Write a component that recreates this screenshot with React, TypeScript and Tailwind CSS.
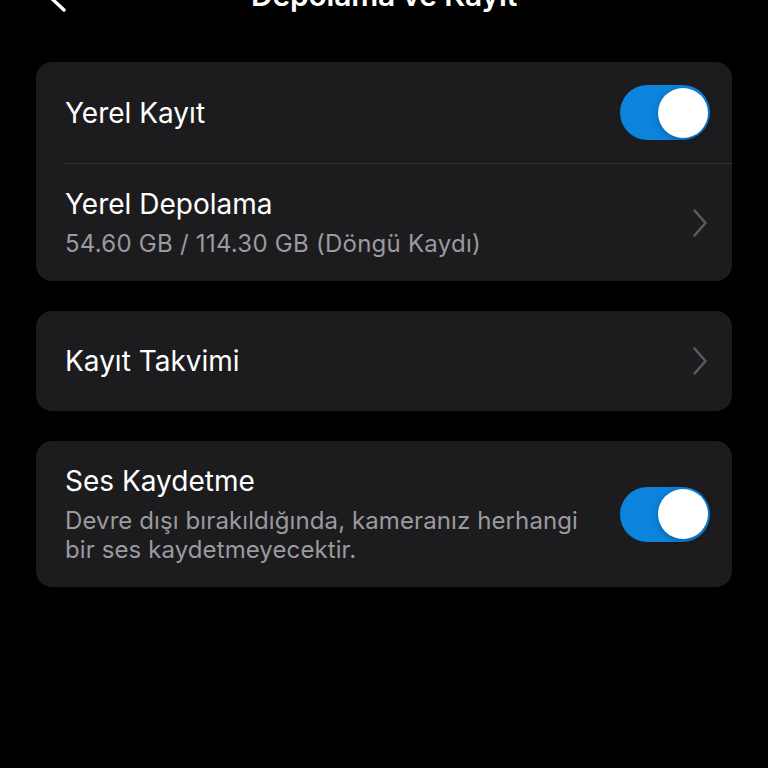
import { useState } from 'react';

function Toggle({ on, onChange }: { on: boolean; onChange: () => void }) {
  return (
    <button
      onClick={onChange}
      className={`relative flex h-[55px] w-[90px] shrink-0 items-center rounded-full px-[2px] ${
        on ? 'justify-end bg-[#0c83dc]' : 'justify-start bg-[#39393d]'
      }`}
    >
      <span className="h-[50px] w-[50px] rounded-full bg-white shadow-[0_2px_6px_rgba(0,0,0,0.25)]" />
    </button>
  );
}

function Chevron() {
  return (
    <svg width="16" height="30" viewBox="0 0 16 30" fill="none" className="shrink-0">
      <path d="M2.5 2.5 L13.5 15 L2.5 27.5" stroke="#5b5b5f" strokeWidth="2.6" strokeLinecap="round" strokeLinejoin="round" />
    </svg>
  );
}

export default function App() {
  const [localRec, setLocalRec] = useState(true);
  const [audio, setAudio] = useState(true);

  return (
    <div
      className="h-[768px] w-[768px] overflow-hidden bg-black text-white"
      style={{ fontFamily: 'Inter, "Noto Sans", sans-serif' }}
    >
      {/* header, scrolled mostly off the top */}
      <div className="relative h-[62px]">
        <svg width="24" height="36" viewBox="0 0 24 36" fill="none" className="absolute left-[44px] top-[-22px]">
          <path d="M20 2 L4 17 L20 32" stroke="white" strokeWidth="3.4" strokeLinecap="round" strokeLinejoin="round" />
        </svg>
        <div className="absolute left-0 right-0 top-[-23px] text-center text-[30px] font-semibold leading-[36px] tracking-[-0.2px]">
          Depolama ve Kayıt
        </div>
      </div>

      <div className="flex flex-col gap-[30px] px-[36px]">
        <div className="overflow-hidden rounded-[16px] bg-[#1c1c1e]">
          <div className="flex h-[101px] items-center justify-between pl-[29px] pr-[22px]">
            <span className="text-[28px] leading-[34px]">Yerel Kayıt</span>
            <Toggle on={localRec} onChange={() => setLocalRec(!localRec)} />
          </div>
          <div className="ml-[28px] h-px bg-[#333336]" />
          <div className="flex h-[117px] items-center justify-between pl-[29px] pr-[24px]">
            <div className="flex flex-col">
              <span className="text-[28px] leading-[34px]">Yerel Depolama</span>
              <span className="mt-[8px] text-[24px] leading-[30px] tracking-[0.25px] text-[#9a9a9f]">
                54.60 GB / 114.30 GB (Döngü Kaydı)
              </span>
            </div>
            <Chevron />
          </div>
        </div>

        <div className="flex h-[100px] items-center justify-between rounded-[16px] bg-[#1c1c1e] pl-[29px] pr-[24px]">
          <span className="text-[28px] leading-[34px]">Kayıt Takvimi</span>
          <Chevron />
        </div>

        <div className="flex items-center justify-between rounded-[16px] bg-[#1c1c1e] pb-[23px] pl-[29px] pr-[22px] pt-[23px]">
          <div className="flex w-[530px] flex-col">
            <span className="text-[28px] leading-[34px]">Ses Kaydetme</span>
            <span className="mt-[8px] text-[24px] leading-[29px] tracking-[0.1px] text-[#9a9a9f]">
              Devre dışı bırakıldığında, kameranız herhangi bir ses kaydetmeyecektir.
            </span>
          </div>
          <Toggle on={audio} onChange={() => setAudio(!audio)} />
        </div>
      </div>
    </div>
  );
}
